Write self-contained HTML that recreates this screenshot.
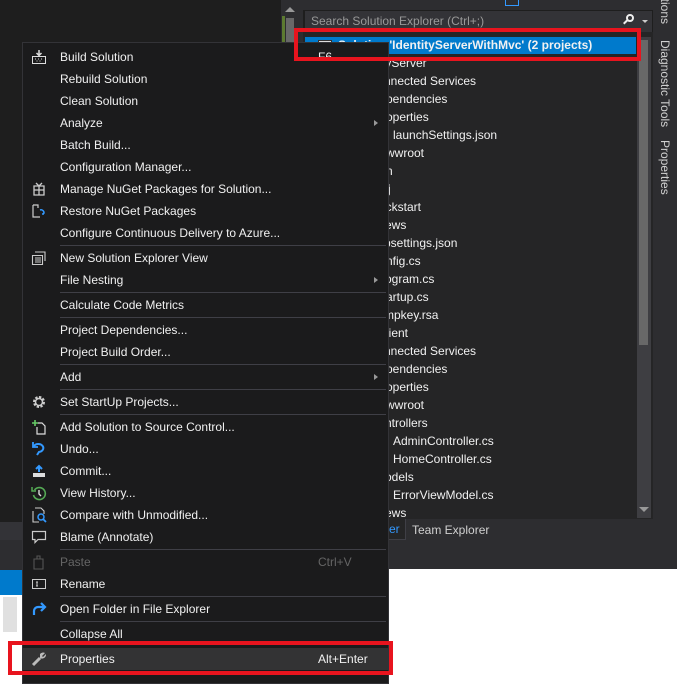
<!DOCTYPE html>
<html><head><meta charset="utf-8"><style>
*{margin:0;padding:0;box-sizing:border-box}
body{width:677px;height:684px;overflow:hidden;position:relative;background:#1e1e1e;font-family:"Liberation Sans",sans-serif;font-size:12px;color:#f1f1f1}
.a{position:absolute}
.row{position:absolute;white-space:nowrap;line-height:18px;height:18px}
.mi{position:absolute;left:0;width:100%;height:22px;line-height:22px;white-space:nowrap}
.mi .t{position:absolute;left:37px}
.mi .k{position:absolute;left:295px}
.mi .ar{position:absolute;right:10px;top:8px;width:0;height:0;border-left:4px solid #999;border-top:3.5px solid transparent;border-bottom:3.5px solid transparent}
.mi svg{position:absolute;left:8px;top:3px}
.sep{position:absolute;left:37px;right:2px;height:1px;background:#3f3f46}
.vt{position:absolute;transform:rotate(90deg);transform-origin:left top;white-space:nowrap;color:#d0d0d0}
</style></head><body>
<div class="a" style="left:281px;top:0;width:22px;height:45px;background:#2d2d30"></div>
<div class="a" style="left:285px;top:7px;width:0;height:0;border-bottom:5px solid #999;border-left:5px solid transparent;border-right:5px solid transparent"></div>
<div class="a" style="left:282px;top:16px;width:3px;height:30px;background:#5c7a30"></div>
<div class="a" style="left:286px;top:18px;width:8px;height:28px;background:#686868"></div>
<div class="a" style="left:303px;top:0;width:350px;height:10px;background:#2d2d30"></div>
<div class="a" style="left:505px;top:0;width:14px;height:6px;border:1px solid #3399ff;border-top:none"></div>
<div class="a" style="left:305px;top:11px;width:347px;height:21px;background:#333337;color:#999;line-height:21px;padding-left:6px">Search Solution Explorer (Ctrl+;)</div>
<div class="a" style="left:626px;top:14px;width:8px;height:8px;border:2px solid #eee;border-radius:50%"></div>
<div class="a" style="left:623px;top:21px;width:5px;height:2px;background:#eee;transform:rotate(-45deg)"></div>
<div class="a" style="left:642px;top:20px;border-top:3px solid #ccc;border-left:3px solid transparent;border-right:3px solid transparent"></div>
<div class="a" style="left:303px;top:32px;width:350px;height:487px;background:#252526"></div>
<div class="a" style="left:637px;top:37px;width:14px;height:481px;background:#3e3e42"></div>
<div class="a" style="left:639px;top:40px;width:9px;height:305px;background:#686868"></div>
<div class="a" style="left:639px;top:507px;border-top:5px solid #999;border-left:5px solid transparent;border-right:5px solid transparent"></div>
<div class="a" style="left:305px;top:37px;width:331px;height:17px;background:#007acc"></div>
<div class="a" style="left:318px;top:40px;width:14px;height:11px;background:#ddd;border:1px solid #333"></div>
<div class="row" style="left:338px;top:37px;font-weight:bold;line-height:17px">Solution 'IdentityServerWithMvc' (2 projects)</div>
<div class="row" style="left:382px;top:54px">tyServer</div>
<div class="row" style="left:384px;top:72px">nnected Services</div>
<div class="row" style="left:386px;top:90px">pendencies</div>
<div class="row" style="left:386px;top:108px">operties</div>
<div class="row" style="left:393px;top:126px">launchSettings.json</div>
<div class="row" style="left:386px;top:144px">wwroot</div>
<div class="row" style="left:386px;top:162px">n</div>
<div class="row" style="left:388px;top:180px">j</div>
<div class="row" style="left:383px;top:198px">ickstart</div>
<div class="row" style="left:385px;top:216px">ews</div>
<div class="row" style="left:384px;top:234px">psettings.json</div>
<div class="row" style="left:386px;top:252px">nfig.cs</div>
<div class="row" style="left:385px;top:270px">ogram.cs</div>
<div class="row" style="left:386px;top:288px">artup.cs</div>
<div class="row" style="left:384px;top:306px">mpkey.rsa</div>
<div class="row" style="left:386px;top:324px">lient</div>
<div class="row" style="left:384px;top:342px">nnected Services</div>
<div class="row" style="left:386px;top:360px">pendencies</div>
<div class="row" style="left:386px;top:378px">operties</div>
<div class="row" style="left:386px;top:396px">wwroot</div>
<div class="row" style="left:385px;top:414px">ntrollers</div>
<div class="row" style="left:393px;top:432px">AdminController.cs</div>
<div class="row" style="left:393px;top:450px">HomeController.cs</div>
<div class="row" style="left:385px;top:468px">odels</div>
<div class="row" style="left:393px;top:486px">ErrorViewModel.cs</div>
<div class="row" style="left:385px;top:504px">ews</div>
<div class="a" style="left:280px;top:519px;width:373px;height:50px;background:#2d2d30"></div>
<div class="a" style="left:380px;top:519px;width:26px;height:21px;background:#252526;border:1px solid #3f3f46;border-top:none;color:#3399ff;line-height:20px;padding-left:8px">er</div>
<div class="a" style="left:412px;top:521px;color:#d0d0d0;line-height:18px">Team Explorer</div>
<div class="a" style="left:653px;top:0;width:24px;height:569px;background:#2d2d30"></div>
<div class="vt" style="left:672px;top:-8px">ations</div>
<div class="vt" style="left:672px;top:40px">Diagnostic Tools</div>
<div class="vt" style="left:672px;top:140px">Properties</div>
<div class="a" style="left:0;top:522px;width:30px;height:18px;background:#333337"></div>
<div class="a" style="left:0;top:540px;width:30px;height:30px;background:#2d2d30"></div>
<div class="a" style="left:0;top:570px;width:30px;height:25px;background:#007acc"></div>
<div class="a" style="left:0;top:595px;width:30px;height:89px;background:#fff"></div>
<div class="a" style="left:3px;top:597px;width:14px;height:35px;background:#e0e0e0"></div>
<div class="a" style="left:280px;top:569px;width:397px;height:115px;background:#fff"></div>
<div class="a" style="left:22px;top:42px;width:367px;height:642px;background:#1b1b1c;border:1px solid #333337">
<div class="mi" style="top:3px"><svg width="16" height="16" viewBox="0 0 16 16"><path d="M8 1v5M5.5 4L8 6.5 10.5 4" stroke="#ddd" stroke-width="1.5" fill="none"/><path d="M1.5 7.5h13v7h-13z" stroke="#ddd" fill="none"/><path d="M4 10h1M7 10h1M10 10h1M5.5 12h1M8.5 12h1" stroke="#ddd"/></svg><span class="t">Build Solution</span><span class="k">F6</span></div>
<div class="mi" style="top:25px"><span class="t">Rebuild Solution</span></div>
<div class="mi" style="top:47px"><span class="t">Clean Solution</span></div>
<div class="mi" style="top:69px"><span class="t">Analyze</span><span class="ar"></span></div>
<div class="mi" style="top:91px"><span class="t">Batch Build...</span></div>
<div class="mi" style="top:113px"><span class="t">Configuration Manager...</span></div>
<div class="mi" style="top:135px"><svg width="16" height="16" viewBox="0 0 16 16"><path d="M3 5h10v9H3zM3 9h10M8 5v9M5 2l3 3 3-3" stroke="#ccc" stroke-width="1.3" fill="none"/></svg><span class="t">Manage NuGet Packages for Solution...</span></div>
<div class="mi" style="top:157px"><svg width="16" height="16" viewBox="0 0 16 16"><path d="M2 2h5v3M2 2v12h5M7 14h2" stroke="#ccc" stroke-width="1.2" fill="none"/><path d="M9 7a3 3 0 0 1 4 3l-1 1M13 11l-2 0" stroke="#3399ff" stroke-width="1.5" fill="none"/></svg><span class="t">Restore NuGet Packages</span></div>
<div class="mi" style="top:179px"><span class="t">Configure Continuous Delivery to Azure...</span></div>
<div class="sep" style="top:202px"></div>
<div class="mi" style="top:204px"><svg width="16" height="16" viewBox="0 0 16 16"><path d="M4 2h10v9M1.5 5.5h10v9h-10zM4 8h6M4 10h6M4 12h6" stroke="#ccc" stroke-width="1.1" fill="none"/></svg><span class="t">New Solution Explorer View</span></div>
<div class="mi" style="top:226px"><span class="t">File Nesting</span><span class="ar"></span></div>
<div class="sep" style="top:249px"></div>
<div class="mi" style="top:251px"><span class="t">Calculate Code Metrics</span></div>
<div class="sep" style="top:274px"></div>
<div class="mi" style="top:276px"><span class="t">Project Dependencies...</span></div>
<div class="mi" style="top:298px"><span class="t">Project Build Order...</span></div>
<div class="sep" style="top:321px"></div>
<div class="mi" style="top:323px"><span class="t">Add</span><span class="ar"></span></div>
<div class="sep" style="top:346px"></div>
<div class="mi" style="top:348px"><svg width="16" height="16" viewBox="0 0 16 16"><circle cx="8" cy="8" r="4.5" stroke="#ccc" stroke-width="3" fill="none" stroke-dasharray="2.2 1.3"/><circle cx="8" cy="8" r="3.5" stroke="#ccc" stroke-width="1.5" fill="none"/></svg><span class="t">Set StartUp Projects...</span></div>
<div class="sep" style="top:371px"></div>
<div class="mi" style="top:373px"><svg width="16" height="16" viewBox="0 0 16 16"><path d="M7 4h4l3 3v8H6V8" stroke="#ddd" stroke-width="1.2" fill="none"/><path d="M4 1v6M1 4h6" stroke="#6c6" stroke-width="1.6"/></svg><span class="t">Add Solution to Source Control...</span></div>
<div class="mi" style="top:395px"><svg width="16" height="16" viewBox="0 0 16 16"><path d="M3 5a5 4 0 1 1 5 6l-2 3" stroke="#3399ff" stroke-width="2" fill="none"/><path d="M2 1v5h5" stroke="#3399ff" stroke-width="1.8" fill="none"/></svg><span class="t">Undo...</span></div>
<div class="mi" style="top:417px"><svg width="16" height="16" viewBox="0 0 16 16"><path d="M2 10h12v4H2z" fill="#ddd"/><path d="M8 9V3M5 6l3-3 3 3" stroke="#3399ff" stroke-width="2" fill="none"/></svg><span class="t">Commit...</span></div>
<div class="mi" style="top:439px"><svg width="16" height="16" viewBox="0 0 16 16"><path d="M3.5 5A6 6 0 1 1 2.5 10" stroke="#5a5" stroke-width="1.6" fill="none"/><path d="M1 2v4h4" stroke="#5a5" stroke-width="1.5" fill="none"/><path d="M8 5v4l2 2" stroke="#ddd" stroke-width="1.4" fill="none"/></svg><span class="t">View History...</span></div>
<div class="mi" style="top:461px"><svg width="16" height="16" viewBox="0 0 16 16"><path d="M4 1h6l3 3v3M2 4v11h6" stroke="#ccc" stroke-width="1.1" fill="none"/><circle cx="10" cy="10" r="3" stroke="#3399ff" stroke-width="1.5" fill="none"/><path d="M12 12l3 3" stroke="#3399ff" stroke-width="1.8"/></svg><span class="t">Compare with Unmodified...</span></div>
<div class="mi" style="top:483px"><svg width="16" height="16" viewBox="0 0 16 16"><path d="M1.5 2.5h13v8H7l-3 3v-3H1.5z" stroke="#ccc" stroke-width="1.2" fill="none"/></svg><span class="t">Blame (Annotate)</span></div>
<div class="sep" style="top:506px"></div>
<div class="mi" style="top:508px;color:#656565"><svg width="16" height="16" viewBox="0 0 16 16"><path d="M3 5h9v10H3zM6 2h3v3H6z" stroke="#555" stroke-width="1.1" fill="none"/></svg><span class="t">Paste</span><span class="k">Ctrl+V</span></div>
<div class="mi" style="top:530px"><svg width="16" height="16" viewBox="0 0 16 16"><path d="M1.5 3.5h13v9h-13zM5 6h2M6 6v4M5 10h2" stroke="#ccc" stroke-width="1" fill="none"/></svg><span class="t">Rename</span></div>
<div class="sep" style="top:553px"></div>
<div class="mi" style="top:555px"><svg width="16" height="16" viewBox="0 0 16 16"><path d="M3 14V10a4 4 0 0 1 4-4h7" stroke="#3399ff" stroke-width="2.2" fill="none"/><path d="M10 2l4 4-4 4" stroke="#3399ff" stroke-width="2.2" fill="none"/></svg><span class="t">Open Folder in File Explorer</span></div>
<div class="sep" style="top:578px"></div>
<div class="mi" style="top:580px"><span class="t">Collapse All</span></div>
<div class="mi" style="top:605px;background:#333334"><svg width="16" height="16" viewBox="0 0 16 16"><path d="M2 14l7-7" stroke="#bbb" stroke-width="3"/><path d="M9 3a4 4 0 0 1 5-1l-3 3 1 1 3-3a4 4 0 0 1-6 4z" fill="#bbb"/></svg><span class="t">Properties</span><span class="k">Alt+Enter</span></div>
</div>
<div class="a" style="left:294px;top:28px;width:347px;height:33px;border:4px solid #e8141e"></div>
<div class="a" style="left:8px;top:641px;width:385px;height:34px;border:4px solid #e8141e"></div>
</body></html>
